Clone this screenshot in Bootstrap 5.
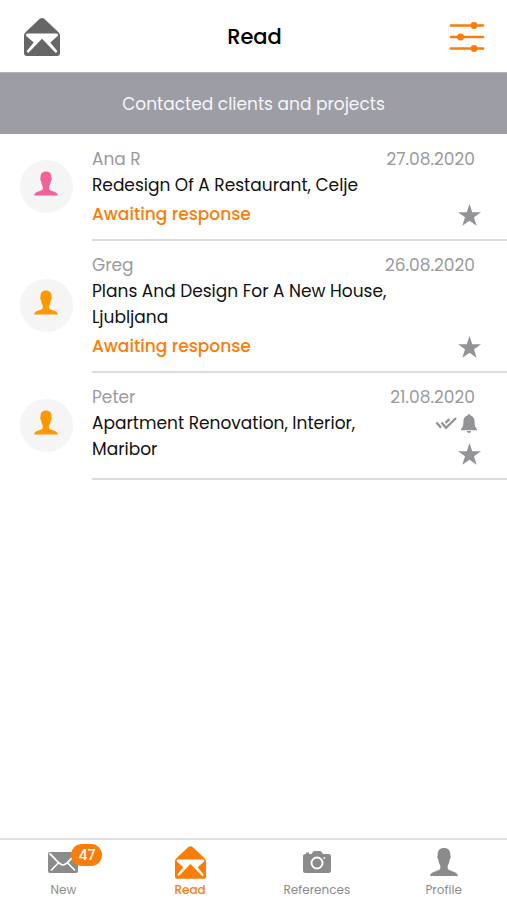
<!DOCTYPE html>
<html lang="en">
<head>
<meta charset="utf-8">
<meta name="viewport" content="width=device-width, initial-scale=1">
<title>Read</title>
<link href="https://cdn.jsdelivr.net/npm/bootstrap@5.3.0/dist/css/bootstrap.min.css" rel="stylesheet">
<style>
body { font-family: Poppins, Inter, "Liberation Sans", sans-serif; font-size: 17px; line-height: 26px; color: #111; background: #fff; }
svg { display: block; fill: currentColor; }
.app-header { height: 72px; padding: 2px 22px 0 24px; }
.app-header h1 { font-size: 21px; line-height: 26px; color: #000; font-weight: 500; }
.side { flex: 1 1 0; }
.tint-dark { color: #666; }
.tint-orange { color: #fb7d09; }
.banner { background: #9d9da6; color: #f6f6f8; height: 62px; border-top: 1px solid #b4b4bb; }
.projects { padding-top: 1px; }
.project { padding-left: 20px; }
.avatar { width: 53px; height: 53px; background: #f5f5f5; margin: 0 19px 3px 0; padding: 0 2px 6px 0; }
.tint-pink { color: #f0629a; }
.tint-amber { color: #ff9800; }
.entry { border-bottom: 2px solid #dcdcdc; padding-top: 12px; min-width: 0; }
.meta { color: #9a9a9d; line-height: 25px; padding-right: 32px; }
.copy { padding-bottom: 12px; }
.status { margin-top: 3px; height: 26px; color: #fb7d09; font-weight: 500; }
.marks { width: 82px; padding: 0 26px 13px 0; color: #929297; }
.tabbar { border-top: 2px solid #e2e2e2; height: 62px; }
.tab { color: #8b8b8b; font-size: 12px; line-height: 18px; padding-top: 6px; }
.tab.current { color: #fb7d09; font-weight: 500; }
.glyph { height: 32px; margin-bottom: 3px; }
.counter { position: absolute; left: 23px; top: -8px; background: #fb7d09; font-size: 14px; font-weight: 500; line-height: 22px; width: 31px; }
</style>
<script src="https://cdn.jsdelivr.net/npm/bootstrap@5.3.0/dist/js/bootstrap.bundle.min.js"></script>
</head>
<body>
<svg class="d-none" aria-hidden="true">
  <symbol id="open-mail" viewBox="0 0 36 38">
    <path d="M15.500.9Q18-.9 20.500.9L33.500 13.200Q35.800 15.200 36 17V35Q36 38 33 38H3Q0 38 0 35V17Q.2 15.200 2.500 13.200Z"/>
    <path fill="#fff" d="M3.500 15.500H32.500Q34 15.500 34 17T32.500 19L26.300 24.500 33.400 33.300 31.800 35 18 20.800 4.200 35 2.600 33.300 9.700 24.500 3.500 19Q2 18.500 2 17T3.500 15.500Z"/>
  </symbol>
  <symbol id="person" viewBox="0 0 28 28">
    <path d="M14 0C18.300 0 20.600 2.600 20.300 7.200 21 8 20.800 10.300 19.800 11.200 19.400 14 18.500 16.200 17.700 17.500V20.500C18.500 23.500 27.200 22.800 28 28H0C.8 22.800 9.500 23.500 10.300 20.500V17.500C9.500 16.200 8.600 14 8.200 11.200 7.200 10.300 7 8 7.700 7.200 7.400 2.600 9.700 0 14 0Z"/>
  </symbol>
  <symbol id="star" viewBox="0 0 22 21">
    <path d="M11 0 13.600 7.800H22L15.300 12.700 17.800 20.700 11 15.900 4.200 20.700 6.700 12.700 0 7.800H8.400Z"/>
  </symbol>
</svg>

<div class="d-flex flex-column min-vh-100">
  <header class="app-header d-flex align-items-center">
    <div class="side d-flex"><a class="tint-dark" href="#" aria-label="Read mail"><svg width="36" height="38"><use href="#open-mail"/></svg></a></div>
    <h1 class="m-0">Read</h1>
    <div class="side d-flex justify-content-end">
      <button type="button" class="btn border-0 p-0 tint-orange" aria-label="Filters">
        <svg width="36" height="32" viewBox="0 0 36 32">
          <path d="M2 4.500H34M2 16H34M2 27.500H34" stroke="currentColor" stroke-width="2.700" stroke-linecap="round"/>
          <circle cx="25" cy="4.500" r="3.400"/><circle cx="11.500" cy="16" r="3.400"/><circle cx="25" cy="27.500" r="3.400"/>
        </svg>
      </button>
    </div>
  </header>
  <div class="banner d-flex align-items-center justify-content-center">Contacted clients and projects</div>

  <main class="projects flex-grow-1">
    <article class="project d-flex">
      <div class="avatar rounded-circle flex-shrink-0 align-self-center d-flex align-items-center justify-content-center tint-pink"><svg width="24" height="25"><use href="#person"/></svg></div>
      <div class="entry flex-grow-1">
        <div class="meta d-flex justify-content-between"><span>Ana R</span><time datetime="2020-08-27">27.08.2020</time></div>
        <div class="d-flex">
          <div class="copy flex-grow-1"><div>Redesign Of A Restaurant, Celje</div><div class="status">Awaiting response</div></div>
          <div class="marks flex-shrink-0 d-flex flex-column align-items-end justify-content-end"><svg width="23" height="22"><use href="#star"/></svg></div>
        </div>
      </div>
    </article>
    <article class="project d-flex">
      <div class="avatar rounded-circle flex-shrink-0 align-self-center d-flex align-items-center justify-content-center tint-amber"><svg width="24" height="25"><use href="#person"/></svg></div>
      <div class="entry flex-grow-1">
        <div class="meta d-flex justify-content-between"><span>Greg</span><time datetime="2020-08-26">26.08.2020</time></div>
        <div class="d-flex">
          <div class="copy flex-grow-1"><div>Plans And Design For A New House, Ljubljana</div><div class="status">Awaiting response</div></div>
          <div class="marks flex-shrink-0 d-flex flex-column align-items-end justify-content-end"><svg width="23" height="22"><use href="#star"/></svg></div>
        </div>
      </div>
    </article>
    <article class="project d-flex">
      <div class="avatar rounded-circle flex-shrink-0 align-self-center d-flex align-items-center justify-content-center tint-amber"><svg width="24" height="25"><use href="#person"/></svg></div>
      <div class="entry flex-grow-1">
        <div class="meta d-flex justify-content-between"><span>Peter</span><time datetime="2020-08-21">21.08.2020</time></div>
        <div class="d-flex">
          <div class="copy flex-grow-1 pb-3"><div>Apartment Renovation, Interior, Maribor</div></div>
          <div class="marks flex-shrink-0 d-flex flex-column align-items-end justify-content-between">
            <div class="d-flex align-items-center gap-1 pt-1 pe-1">
              <svg width="22" height="14" viewBox="0 0 22 14" stroke="currentColor" stroke-width="2.300"><path fill="none" d="M1.500 5.500 6 10.800M6.500 5.500 11 10.800 21 1M10.500 5.800 14.500 2.200"/></svg>
              <svg width="16" height="19" viewBox="0 0 16 19"><path d="M8 0Q9.300 0 9.400 1.500C12.600 2.200 13.600 5 13.600 8 13.600 11.500 14.200 13.500 16 15V16.200H0V15C1.800 13.500 2.400 11.500 2.400 8 2.400 5 3.400 2.200 6.600 1.500Q6.700 0 8 0ZM5.800 17H10.200Q9.800 19 8 19T5.800 17Z"/></svg>
            </div>
            <svg width="23" height="22"><use href="#star"/></svg>
          </div>
        </div>
      </div>
    </article>
  </main>

  <nav class="tabbar row g-0 text-center" aria-label="Main">
    <a class="tab col text-decoration-none" href="#">
      <div class="glyph d-flex align-items-center justify-content-center"><span class="position-relative">
        <svg width="30" height="21" viewBox="0 0 30 21"><rect width="30" height="21" rx="2"/><path d="M1.500 1.500C8 7 11 13 15 13S22 7 28.500 1.500M3 18.500 10.300 11M27 18.500 19.700 11" fill="none" stroke="#fff" stroke-width="1.700"/></svg>
        <span class="counter rounded-pill text-white">47</span>
      </span></div>
      <span class="d-block">New</span>
    </a>
    <a class="tab current col text-decoration-none" href="#" aria-current="page">
      <div class="glyph d-flex align-items-center justify-content-center"><svg width="31" height="33"><use href="#open-mail"/></svg></div>
      <span class="d-block">Read</span>
    </a>
    <a class="tab col text-decoration-none" href="#">
      <div class="glyph d-flex align-items-center justify-content-center"><svg width="28" height="22" viewBox="0 0 28 22"><path d="M3 1.500H6V3H8.500L10 .8Q10.500 0 11.500 0H17Q18 0 18.500.8L20 3H25.500Q28 3 28 5.500V19.500Q28 22 25.500 22H2.500Q0 22 0 19.500V5Q0 3 3 3Z"/><circle cx="14" cy="12" r="5.500" fill="none" stroke="#fff" stroke-width="1.900"/><circle cx="21.300" cy="7" r=".9" fill="#fff"/></svg></div>
      <span class="d-block">References</span>
    </a>
    <a class="tab col text-decoration-none" href="#">
      <div class="glyph d-flex align-items-center justify-content-center"><svg width="28" height="28"><use href="#person"/></svg></div>
      <span class="d-block">Profile</span>
    </a>
  </nav>
</div>
</body>
</html>
